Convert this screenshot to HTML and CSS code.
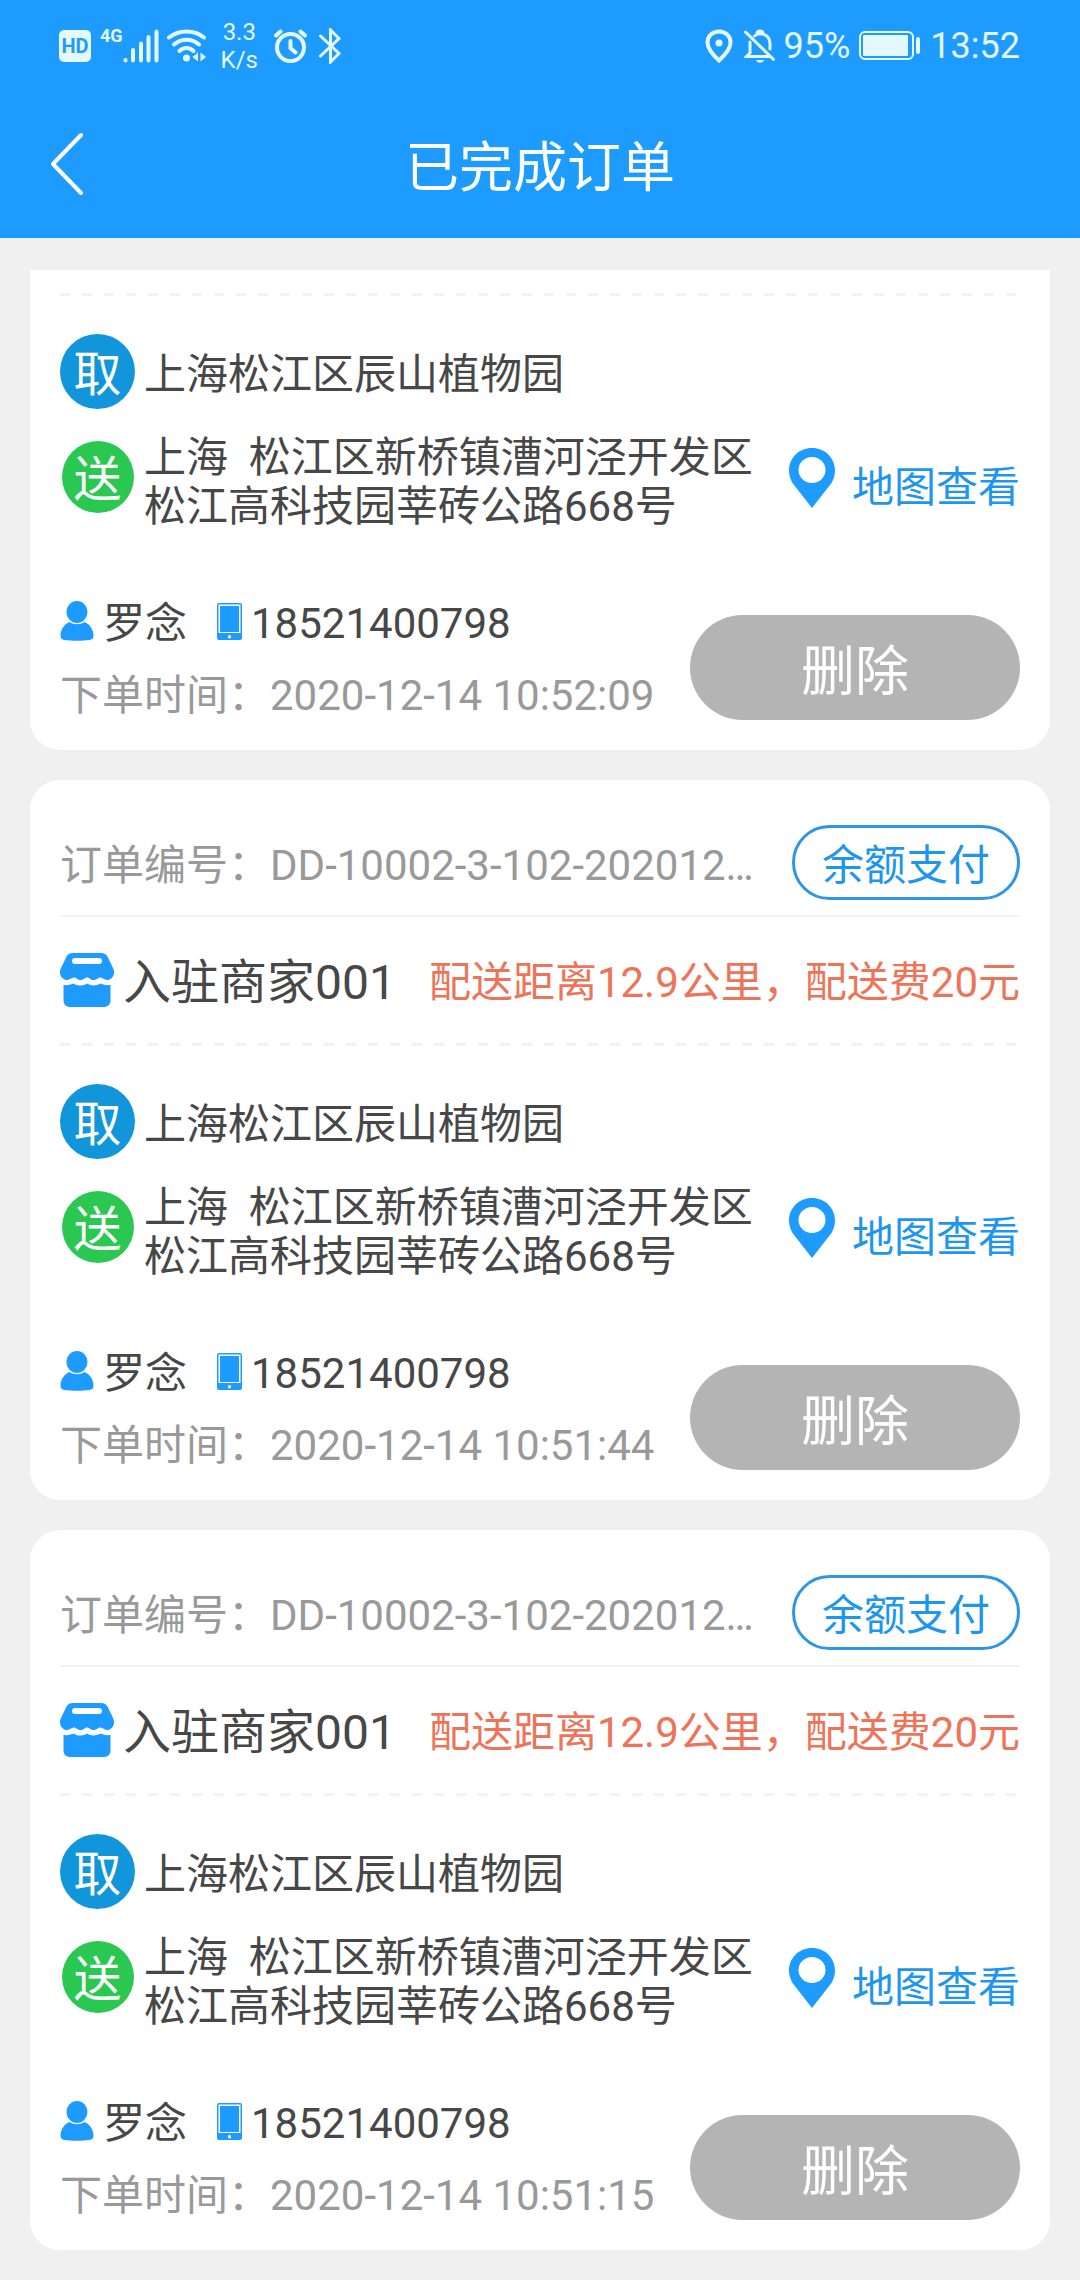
FILE: index.html
```html
<!DOCTYPE html>
<html lang="zh-CN">
<head>
<meta charset="utf-8">
<meta name="viewport" content="width=device-width, initial-scale=1">
<title>已完成订单</title>
<link rel="stylesheet" href="styles.css">
</head>
<body>
<svg class="sprite" aria-hidden="true">
  <symbol id="i-pin" viewBox="0 0 46 60"><path fill-rule="evenodd" d="M23 0C10 0 0 10 0 22.500c0 5 1.500 9 3.500 12.500L23 60l19.500-25c2-3.500 3.500-7.500 3.500-12.500C46 10 36 0 23 0zm0 9a13.500 13 0 1 1 0 26 13.500 13 0 1 1 0-26z"/></symbol>
  <symbol id="i-user" viewBox="0 0 34 40"><ellipse cx="17" cy="11" rx="10.500" ry="11"/><path d="M9.500 21c4.500 3 10.500 3 15 0 5 2 9 7.500 9 13.500 0 3-1.500 4-4 4.500-7 1-18 1-25 0-2.500-.5-4-1.500-4-4.500C.5 28.500 4.500 23 9.500 21z"/></symbol>
  <symbol id="i-phone" viewBox="0 0 25 37"><path fill-rule="evenodd" d="M2 0h21a2 2 0 0 1 2 2v33a2 2 0 0 1-2 2H2a2 2 0 0 1-2-2V2a2 2 0 0 1 2-2zM1.500 1.500V30h22V1.500zM12.500 32a1.700 1.700 0 1 0 0 3.400 1.700 1.700 0 1 0 0-3.400z"/><path d="M3 3h19v26H3z"/></symbol>
  <symbol id="i-shop" viewBox="0 0 54 54"><path fill-rule="evenodd" d="M13 0h28c3 0 5 1 6.500 3.500L53 15c3 6-1 12-6 12-3 0-4-2.500-6.500-2.500S37 27 33.500 27 29.500 24.500 27 24.500 24 27 20.500 27s-4-2.500-6.500-2.500S10 27 7 27c-5 0-9-6-6-12L6.500 3.500C8 1 10 0 13 0zM15 5a3 3 0 0 0 0 6h24a3 3 0 0 0 0-6z"/><path d="M3.500 32c5 .5 8-.5 10-1.500 2 1.500 4 2 7 2s4.500-1 6.500-2c2 1 4 2 6.500 2s5-1 7-2c2 1 5 2 10 1.500V47c0 5-3 7-7 7h-33c-4 0-7-2-7-7z"/></symbol>
</svg>

<header class="header">
  <div class="status">
    <div class="status-group">
      <span class="hd">HD</span>
      <span class="net">4G</span>
      <svg class="signal" width="36" height="34" viewBox="0 0 36 34" aria-hidden="true"><path d="M2.500 31v.5M10 21v10.500M18 14.500v17M25.500 8v23.500M33.500 2.500v29"/></svg>
      <svg class="wifi" width="40" height="34" viewBox="0 0 40 34" aria-hidden="true"><path class="line" d="M2 8.500C12 .5 27 .5 37 8.500M7 15.500c7.500-6.500 17.500-6.500 25 0M12.500 22c4-4 10-4 14 0"/><circle cx="19.500" cy="29" r="3.500"/><path d="M31 23.500v9l-5.500-4.500zM33.500 23.500v9l5.500-4.500z"/></svg>
      <span class="speed">3.3<br>K/s</span>
      <svg class="alarm" width="33" height="34" viewBox="0 0 33 34" aria-hidden="true"><circle cx="16.500" cy="18.500" r="13.500"/><path d="M16.500 12v7l5 4.500M2 6.500l4.500-4M31 6.500l-4.500-4"/></svg>
      <svg class="bluetooth" width="22" height="36" viewBox="0 0 22 36" aria-hidden="true"><path d="M1.500 8L20 25.500l-8.500 8.500V2l8.500 8.500L1.500 28"/></svg>
    </div>
    <div class="status-group">
      <svg class="place" width="28" height="34" viewBox="0 0 28 34" aria-hidden="true"><path d="M14 2.500C7.500 2.500 2.500 7 2.500 13.500 2.500 20 8 26 14 31.500 20 26 25.500 20 25.500 13.500 25.500 7 20.500 2.500 14 2.500z"/><circle class="dot" cx="14" cy="14" r="3.500"/></svg>
      <svg class="bell" width="32" height="34" viewBox="0 0 32 34" aria-hidden="true"><path d="M1.500 3l28 27.500M6 13v11l-3.500 3.500H25M10.500 7c4-4 15.500-3 15.500 8v5M13 5c0-4 6-4 6 0"/><path class="fill" d="M12 31h8c-1 3.500-7 3.500-8 0z"/></svg>
      <span class="status-text">95%</span>
      <svg class="battery" width="62" height="30" viewBox="0 0 62 30" aria-hidden="true"><rect class="frame" x="1" y="1" width="53" height="27" rx="5"/><rect x="4" y="4" width="45" height="21" rx="1"/><rect x="57" y="6" width="4" height="17" rx="2"/></svg>
      <span class="status-text clock">13:52</span>
    </div>
  </div>
  <div class="nav">
    <button class="back" type="button" aria-label="返回"><svg width="36" height="64" viewBox="0 0 36 64" aria-hidden="true"><path d="M32 3L4 32l28 29"/></svg></button>
    <h1 class="title">已完成订单</h1>
  </div>
</header>

<main class="list">
  <article class="card card-cut">
    <div class="route">
      <span class="mark mark-from">取</span>
      <p class="place-name place-from">上海松江区辰山植物园</p>
      <span class="mark mark-to">送</span>
      <p class="place-name">上海&nbsp;&nbsp;松江区新桥镇漕河泾开发区松江高科技园莘砖公路668号</p>
      <a class="map" href="#map"><svg width="46" height="60" aria-hidden="true"><use href="#i-pin"/></svg><span class="map-label">地图查看</span></a>
    </div>
    <div class="foot">
      <div class="info">
        <p class="contact"><svg width="34" height="40" aria-hidden="true"><use href="#i-user"/></svg><span class="person">罗念</span><svg width="25" height="37" aria-hidden="true"><use href="#i-phone"/></svg><span class="number">18521400798</span></p>
        <p class="muted">下单时间：2020-12-14 10:52:09</p>
      </div>
      <button class="delete" type="button">删除</button>
    </div>
  </article>

  <article class="card">
    <div class="order">
      <p class="muted order-no">订单编号：DD-10002-3-102-202012…</p>
      <span class="pay">余额支付</span>
    </div>
    <div class="shop">
      <svg width="54" height="54" aria-hidden="true"><use href="#i-shop"/></svg>
      <h2 class="shop-name">入驻商家001</h2>
      <p class="fee">配送距离12.9公里，配送费20元</p>
    </div>
    <div class="route">
      <span class="mark mark-from">取</span>
      <p class="place-name place-from">上海松江区辰山植物园</p>
      <span class="mark mark-to">送</span>
      <p class="place-name">上海&nbsp;&nbsp;松江区新桥镇漕河泾开发区松江高科技园莘砖公路668号</p>
      <a class="map" href="#map"><svg width="46" height="60" aria-hidden="true"><use href="#i-pin"/></svg><span class="map-label">地图查看</span></a>
    </div>
    <div class="foot">
      <div class="info">
        <p class="contact"><svg width="34" height="40" aria-hidden="true"><use href="#i-user"/></svg><span class="person">罗念</span><svg width="25" height="37" aria-hidden="true"><use href="#i-phone"/></svg><span class="number">18521400798</span></p>
        <p class="muted">下单时间：2020-12-14 10:51:44</p>
      </div>
      <button class="delete" type="button">删除</button>
    </div>
  </article>

  <article class="card">
    <div class="order">
      <p class="muted order-no">订单编号：DD-10002-3-102-202012…</p>
      <span class="pay">余额支付</span>
    </div>
    <div class="shop">
      <svg width="54" height="54" aria-hidden="true"><use href="#i-shop"/></svg>
      <h2 class="shop-name">入驻商家001</h2>
      <p class="fee">配送距离12.9公里，配送费20元</p>
    </div>
    <div class="route">
      <span class="mark mark-from">取</span>
      <p class="place-name place-from">上海松江区辰山植物园</p>
      <span class="mark mark-to">送</span>
      <p class="place-name">上海&nbsp;&nbsp;松江区新桥镇漕河泾开发区松江高科技园莘砖公路668号</p>
      <a class="map" href="#map"><svg width="46" height="60" aria-hidden="true"><use href="#i-pin"/></svg><span class="map-label">地图查看</span></a>
    </div>
    <div class="foot">
      <div class="info">
        <p class="contact"><svg width="34" height="40" aria-hidden="true"><use href="#i-user"/></svg><span class="person">罗念</span><svg width="25" height="37" aria-hidden="true"><use href="#i-phone"/></svg><span class="number">18521400798</span></p>
        <p class="muted">下单时间：2020-12-14 10:51:15</p>
      </div>
      <button class="delete" type="button">删除</button>
    </div>
  </article>
</main>
</body>
</html>
```
FILE: styles.css
```css
* {
  box-sizing: border-box;
  margin: 0;
  padding: 0;
}

body {
  background: #f0f0f0;
  color: #474747;
  font: 42px/48px Roboto, "Noto Sans CJK SC", sans-serif;
}

button {
  border: 0;
  font-family: inherit;
  cursor: pointer;
}

.sprite {
  display: none;
}

/* Header */
.header {
  background: #1e9bff;
  color: #fff;
}

.status {
  display: flex;
  align-items: center;
  justify-content: space-between;
  height: 90px;
  padding: 2px 60px 0 59px;
  color: #e3f8ff;
}

.status-group {
  display: flex;
  align-items: center;
}

.status svg {
  fill: currentColor;
}

.hd {
  width: 32px;
  border-radius: 5px;
  background: #e3f8ff;
  color: #1e9bff;
  font-size: 20px;
  font-weight: 700;
  line-height: 32px;
  text-align: center;
}

.net {
  align-self: flex-start;
  margin: 8px 0 0 9px;
  font-size: 18px;
  font-weight: 700;
  line-height: 20px;
}

.status .signal,
.status .wifi .line,
.status .alarm,
.status .bluetooth,
.status .place,
.status .bell,
.status .frame {
  fill: none;
  stroke: currentColor;
  stroke-linecap: round;
  stroke-width: 4px;
}

.wifi {
  margin-left: 8px;
}

.speed {
  margin-left: 14px;
  font-size: 24px;
  line-height: 28px;
  text-align: center;
}

.alarm {
  margin-left: 16px;
}

.bluetooth {
  margin-left: 12px;
}

.status .bluetooth,
.status .bell {
  stroke-width: 3px;
}

.status .place .dot,
.status .bell .fill {
  fill: currentColor;
  stroke: none;
}

.bell {
  margin: 0 8px 0 11px;
}

.status-text {
  font-size: 36px;
}

.status .frame {
  stroke-width: 2px;
}

.battery {
  margin: 0 9px;
}

.nav {
  display: grid;
  grid-template-columns: 120px 1fr 120px;
  align-items: center;
  height: 148px;
}

.back {
  display: flex;
  padding-left: 49px;
  background: none;
}

.back path {
  fill: none;
  stroke: #fff;
  stroke-linecap: round;
  stroke-linejoin: round;
  stroke-width: 4px;
}

.title {
  padding-top: 10px;
  font-size: 54px;
  font-weight: 400;
  line-height: 72px;
  text-align: center;
}

/* Order cards */
.list {
  display: flex;
  flex-direction: column;
  gap: 30px;
  padding: 32px 30px 30px;
}

.card {
  padding: 45px 30px 30px;
  border-radius: 30px;
  background: #fff;
}

.card-cut {
  padding-top: 23px;
  border-radius: 0 0 30px 30px;
}

.card svg {
  flex: none;
  fill: #1e9bff;
}

.muted {
  color: #999;
}

.order {
  display: flex;
  align-items: center;
  justify-content: space-between;
  gap: 24px;
  padding-bottom: 15px;
  border-bottom: 2px solid #f2f2f2;
}

.order-no {
  overflow: hidden;
  padding-top: 6px;
  white-space: nowrap;
}

.pay {
  flex: none;
  padding: 15px 27px 9px;
  border: 3px solid #2d96e6;
  border-radius: 38px;
  color: #1e96f0;
  line-height: 45px;
}

.shop {
  display: flex;
  align-items: center;
  padding: 27px 0;
}

.shop-name {
  padding-top: 6px;
  margin-left: 9px;
  font-size: 48px;
  font-weight: 400;
  line-height: 66px;
}

.fee {
  padding-top: 6px;
  margin-left: auto;
  color: #ee7459;
}

.route {
  display: grid;
  grid-template-columns: 75px 1fr auto;
  column-gap: 9px;
  row-gap: 24px;
  align-items: center;
  padding: 41px 0 69px;
  background: repeating-linear-gradient(90deg, #f2f2f2 0 10px, transparent 10px 22px) 0 0 / 100% 3px no-repeat;
}

.mark {
  justify-self: center;
  padding-top: 6px;
  border-radius: 50%;
  color: #fff;
  font-size: 48px;
  text-align: center;
}

.mark-from {
  width: 75px;
  background: #1296db;
  line-height: 69px;
}

.mark-to {
  width: 72px;
  margin-bottom: 10px;
  background: #2ac851;
  line-height: 66px;
}

.place-name {
  line-height: 49px;
}

.place-from {
  grid-column: 2 / 4;
  padding-top: 6px;
}

.map {
  display: flex;
  align-items: center;
  gap: 17px;
  margin-bottom: 8px;
  color: #1e96f0;
  text-decoration: none;
}

.map-label {
  padding-top: 20px;
}

.foot {
  display: flex;
  align-items: flex-end;
  justify-content: space-between;
}

.info {
  display: grid;
  gap: 24px;
}

.contact {
  display: flex;
  align-items: center;
}

.contact svg {
  margin-bottom: 6px;
}

.person {
  margin: 0 30px 0 9px;
}

.number {
  margin-left: 9px;
}

.delete {
  width: 330px;
  height: 105px;
  border-radius: 53px;
  background: #b4b4b4;
  color: #fff;
  font-size: 54px;
}
```
